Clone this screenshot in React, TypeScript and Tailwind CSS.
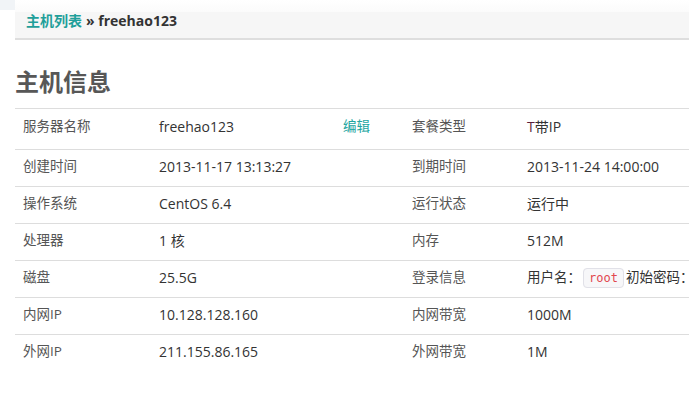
const rows = [
  { k1: "服务器名称", v1: "freehao123", edit: true, k2: "套餐类型", v2: "plan" },
  { k1: "创建时间", v1: "2013-11-17 13:13:27", k2: "到期时间", v2: "2013-11-24 14:00:00" },
  { k1: "操作系统", v1: "CentOS 6.4", k2: "运行状态", v2: "运行中" },
  { k1: "处理器", v1: "1 核", k2: "内存", v2: "512M" },
  { k1: "磁盘", v1: "25.5G", k2: "登录信息", v2: "login" },
  { k1: "内网IP", v1: "10.128.128.160", k2: "内网带宽", v2: "1000M" },
  { k1: "外网IP", v1: "211.155.86.165", k2: "外网带宽", v2: "1M" },
];

function Code({ children }: { children: React.ReactNode }) {
  return (
    <code className="mx-[2px] rounded-[4px] border border-[#e1e1e8] bg-[#f7f7f9] px-[5px] py-[2px] text-[12px] text-[#e2474f] [font-family:'DejaVu_Sans_Mono',monospace]">
      {children}
    </code>
  );
}

function Value({ v }: { v: string }) {
  if (v === "plan")
    return (
      <span>
        <span className="text-[#5b1e3c]">T</span>带IP
      </span>
    );
  if (v === "login")
    return (
      <span className="text-[13.5px]">
        用户名：<Code>root</Code>初始密码：<Code>xxxxxxxx</Code>
      </span>
    );
  return <span>{v}</span>;
}

export default function App() {
  return (
    <div className="h-[401px] w-[689px] overflow-hidden bg-white text-[14px] [font-family:'Open_Sans','Noto_Sans_CJK_SC',sans-serif]">
      <div className="flex">
        <div className="w-[15px] shrink-0">
          <div className="h-[10px] bg-[#f1f4f7]" />
        </div>
        <div className="flex-1">
          <div className="h-[12px] bg-gradient-to-b from-white to-[#fbfbfb]" />
          <div className="flex h-[28px] items-start border-b-2 border-[#dedede] bg-[#f6f6f6] pl-[11px] text-[14px] font-bold leading-[18px] text-[#333]">
            <span className="text-[#1f9f9a]">主机列表</span>
            <span className="ml-[4px]">» freehao123</span>
          </div>
        </div>
      </div>

      <div className="pl-[15px]">
        <h1 className="mt-[26px] mb-[10px] text-[24px] font-bold leading-[32px] text-[#575757]">主机信息</h1>
        <div className="w-[820px]">
          {rows.map((r, i) => (
            <div
              key={r.k1}
              className={`grid grid-cols-[136px_184px_69px_115px_1fr] items-center whitespace-nowrap border-t border-[#dddddd] ${
                i === 0 ? "h-[41px] pb-[5px]" : "h-[37px] pb-[4px]"
              }`}
            >
              <div className="pl-[8px] text-[13.5px] text-[#555]">{r.k1}</div>
              <div className="pl-[8px] text-[#333]">{r.v1}</div>
              <div className="pl-[8px] text-[13.5px] text-[#22a5a0]">{r.edit ? "编辑" : ""}</div>
              <div className="pl-[8px] text-[13.5px] text-[#555]">{r.k2}</div>
              <div className="pl-[8px] text-[#333]">
                <Value v={r.v2} />
              </div>
            </div>
          ))}
        </div>
      </div>
    </div>
  );
}
